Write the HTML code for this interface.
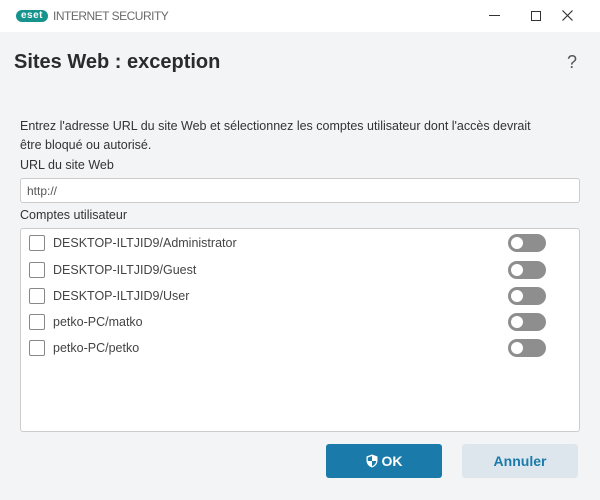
<!DOCTYPE html>
<html><head><meta charset="utf-8"><style>
*{margin:0;padding:0;box-sizing:border-box}
body{width:600px;height:500px;background:#f3f4f6;font-family:"Liberation Sans",sans-serif;position:relative;overflow:hidden;color:#333}
.tb{position:absolute;left:0;top:0;width:600px;height:32px;background:#fff}
.abs{position:absolute}
.row{position:absolute;left:29px;height:16px}
.cb{position:absolute;left:0;top:0;width:16px;height:16px;border:1.5px solid #888;border-radius:2px;background:#fff}
.lbl{position:absolute;left:24px;top:0;font-size:12.5px;color:#444;white-space:nowrap;line-height:17px}
.tg{position:absolute;left:479px;top:-1px;width:38px;height:18px;border-radius:9px;background:#8e8e8e}
.tg:after{content:"";position:absolute;left:3px;top:3px;width:12px;height:12px;border-radius:6px;background:#fff}
</style></head><body>
<div class="tb">
 <div class="abs" style="left:16px;top:10px;width:32px;height:12px;background:#16938d;border-radius:6px;color:#fff;font-size:10px;font-weight:bold;line-height:12px;text-align:center;letter-spacing:0.5px">eset</div>
 <div class="abs" style="left:53px;top:9px;font-size:12px;color:#6a6a6a;letter-spacing:-0.5px">INTERNET SECURITY</div>
 <div class="abs" style="left:489px;top:15px;width:11px;height:1px;background:#333"></div>
 <div class="abs" style="left:531px;top:11px;width:10px;height:10px;border:1px solid #333"></div>
 <svg class="abs" style="left:562px;top:10px" width="11" height="11"><path d="M0.5 0.5L10.5 10.5M10.5 0.5L0.5 10.5" stroke="#333" stroke-width="1.2"/></svg>
</div>
<div class="abs" style="left:14px;top:51px;font-size:20px;font-weight:bold;color:#2b2b2b">Sites Web : exception</div>
<div class="abs" style="left:567px;top:52px;font-size:18px;color:#555">?</div>
<div class="abs" style="left:20px;top:117px;font-size:12.5px;line-height:19px;color:#333;width:535px">Entrez l'adresse URL du site Web et sélectionnez les comptes utilisateur dont l'accès devrait être bloqué ou autorisé.</div>
<div class="abs" style="left:20px;top:158px;font-size:12.5px;color:#333">URL du site Web</div>
<div class="abs" style="left:20px;top:178px;width:560px;height:25px;background:#fff;border:1px solid #ccc;border-radius:3px;font-size:12px;color:#555;padding:5px 0 0 6px">http://</div>
<div class="abs" style="left:20px;top:208px;font-size:12.5px;color:#333">Comptes utilisateur</div>
<div class="abs" style="left:20px;top:228px;width:560px;height:204px;background:#fff;border:1px solid #ccc;border-radius:3px"></div>
<div class="row" style="top:235px"><div class="cb"></div><div class="lbl">DESKTOP-ILTJID9/Administrator</div><div class="tg"></div></div>
<div class="row" style="top:262px"><div class="cb"></div><div class="lbl">DESKTOP-ILTJID9/Guest</div><div class="tg"></div></div>
<div class="row" style="top:288px"><div class="cb"></div><div class="lbl">DESKTOP-ILTJID9/User</div><div class="tg"></div></div>
<div class="row" style="top:314px"><div class="cb"></div><div class="lbl">petko-PC/matko</div><div class="tg"></div></div>
<div class="row" style="top:340px"><div class="cb"></div><div class="lbl">petko-PC/petko</div><div class="tg"></div></div>
<div class="abs" style="left:326px;top:444px;width:116px;height:34px;background:#1a7bab;border-radius:3px;color:#fff;font-size:14px;font-weight:bold;text-align:center;line-height:34px">
<svg width="12" height="14" viewBox="0 0 12 14" style="vertical-align:-2px;margin-right:4px"><path d="M6 0.5L11.5 2.5V6.5C11.5 10 9 12.5 6 13.5C3 12.5 0.5 10 0.5 6.5V2.5Z" fill="#fff"/><path d="M6 2V7H10.2C10 9.5 8.3 11.3 6 12.2V7H1.8V3.5Z" fill="#1a7bab"/></svg>OK</div>
<div class="abs" style="left:462px;top:444px;width:116px;height:34px;background:#dde6ed;border-radius:3px;color:#1a7bab;font-size:14px;font-weight:bold;text-align:center;line-height:34px">Annuler</div>
</body></html>
